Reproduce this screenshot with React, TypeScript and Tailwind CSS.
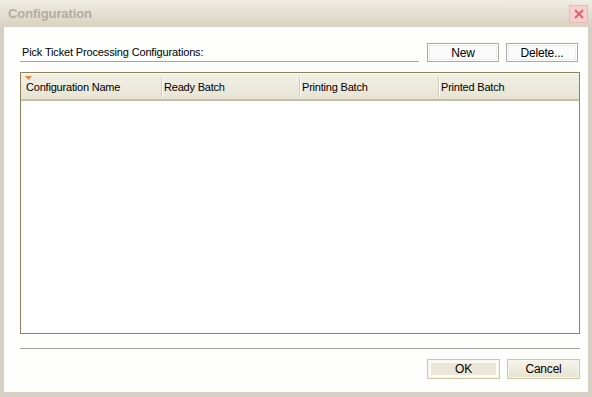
import React from "react";

const font = { fontFamily: '"Liberation Sans", Arial, sans-serif' };

function XpButton({ label, kind }: { label: string; kind: "grey" | "tan" | "default" }) {
  if (kind === "grey") {
    return (
      <div className="w-[72px] h-[19px] border border-[#a9a9a9] bg-white p-px">
        <div className="w-full h-full border border-[#ececec] bg-[#fbfbfb] flex items-center justify-center text-[12px] text-black leading-none tracking-[-0.2px]">
          {label}
        </div>
      </div>
    );
  }
  return (
    <div className="w-[73px] h-[20px] border border-[#cfc6a6] bg-[#f7f5ee] p-px">
      <div
        className={
          "w-full h-full flex items-center justify-center text-[12px] text-black leading-none tracking-[-0.2px] " +
          (kind === "default"
            ? "border-2 border-[#fbfaf4] bg-[#ebe7d8]"
            : "bg-gradient-to-b from-[#f4f2ea] to-[#e8e4d4]")
        }
      >
        {label}
      </div>
    </div>
  );
}

export default function App() {
  const cols = [
    { name: "Configuration Name", w: 140 },
    { name: "Ready Batch", w: 138 },
    { name: "Printing Batch", w: 139 },
    { name: "Printed Batch", w: 140 },
  ];
  return (
    <div className="w-[592px] h-[397px] flex flex-col bg-[#d5d0c3] overflow-hidden" style={font}>
      {/* Title bar */}
      <div className="h-[27px] shrink-0 flex items-center justify-between pl-[8px] pr-[4px] bg-gradient-to-b from-[#efece3] to-[#d9d2c2]">
        <span className="text-[13px] font-bold text-[#b4ac9c] tracking-[-0.1px]">Configuration</span>
        <div className="w-[19px] h-[18px] mt-[1px] bg-[#f8cfcf] border border-[#e8b8b8] flex items-center justify-center">
          <svg width="10" height="10" viewBox="0 0 10 10">
            <path d="M1 1 L9 9 M9 1 L1 9" stroke="#d9676b" strokeWidth="2" />
          </svg>
        </div>
      </div>
      {/* Body */}
      <div className="flex-1 flex flex-col ml-[4px] mr-[4px] mb-[5px] bg-[#fdfdfb] pl-[16px] pr-[9px] pt-[16px]">
        <div className="h-[19px] flex items-start">
          <div className="w-[399px] h-[19px] border-b border-[#a3a3a3] flex items-center pl-[2px] text-[11px] text-black tracking-[-0.15px]">
            Pick Ticket Processing Configurations:
          </div>
          <div className="ml-[8px]">
            <XpButton label="New" kind="grey" />
          </div>
          <div className="ml-[7px]">
            <XpButton label="Delete..." kind="grey" />
          </div>
        </div>
        {/* Table */}
        <div className="mt-[10px] w-[560px] h-[262px] border border-[#8e815b] bg-white flex flex-col">
          <div className="relative h-[28px] flex border-t border-[#fbfaf5] bg-gradient-to-b from-[#f1efe6] to-[#e8e4d4] border-b-2 border-b-[#c4bea9]">
            <svg className="absolute left-[4px] top-[2px]" width="7" height="5" viewBox="0 0 7 5">
              <path d="M0 0 H7 L3.5 4 Z" fill="#f0843c" />
            </svg>
            {cols.map((c, i) => (
              <div
                key={c.name}
                className="flex items-center h-full text-[11px] text-black tracking-[-0.2px] pt-[1px]"
                style={{ width: c.w }}
              >
                {i > 0 && (
                  <div className="h-[20px] w-[2px] border-l border-[#d4cdb6] bg-white mr-[1px]" />
                )}
                <span className={i === 0 ? "pl-[5px]" : ""}>{c.name}</span>
              </div>
            ))}
          </div>
          <div className="flex-1" />
        </div>
        {/* Separator */}
        <div className="mt-[14px] w-[560px] h-px bg-[#a3a3a3]" />
        <div className="mt-[10px] w-[560px] flex justify-end gap-[7px]">
          <XpButton label="OK" kind="default" />
          <XpButton label="Cancel" kind="tan" />
        </div>
      </div>
    </div>
  );
}
